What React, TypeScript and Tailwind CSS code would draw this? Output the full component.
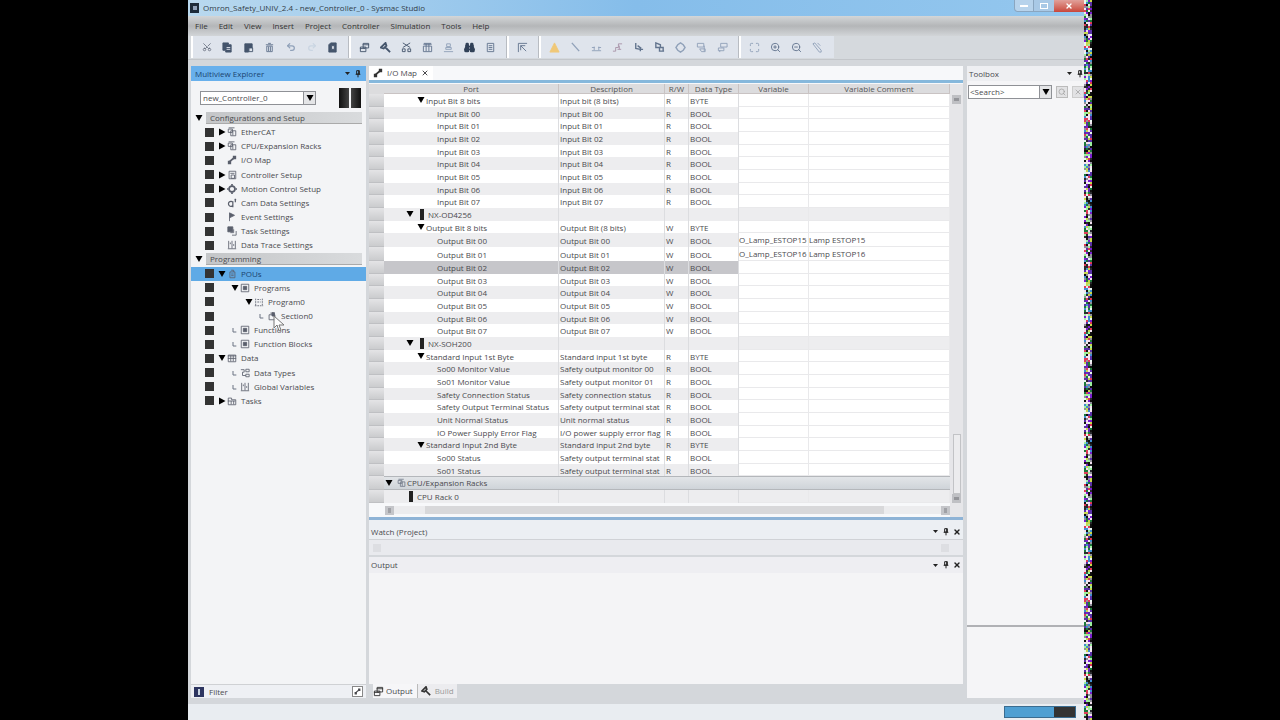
import React from 'react'
import {
  Scissors,
  Undo2,
  Redo2,
  Binoculars,
  ZoomIn,
  ZoomOut,
  Maximize,
  Search,
  X,
} from 'lucide-react'

type IconName =
  | 'copy' | 'paste' | 'trash' | 'book' | 'windows' | 'hammer' | 'cutBox' | 'grid' | 'stamp'
  | 'list' | 'corner' | 'warning' | 'slash' | 'wave' | 'graph' | 'plug' | 'plugs' | 'ring'
  | 'stack' | 'stackUp' | 'pencil' | 'rack' | 'map' | 'sheet' | 'gear' | 'cam' | 'flag'
  | 'task' | 'trace' | 'pou' | 'program' | 'dots' | 'section' | 'data' | 'types' | 'folder'
  | 'pin' | 'branch'

const shapes: Record<IconName, React.ReactNode> = {
  copy: <><path d="M1 1h6v2h3v8H4V9H1z" fill="currentColor" /><path d="M5 6h4M5 8h4" stroke="#dfe4ec" /></>,
  paste: <><path d="M2 2h8v5H6v4H2z" fill="currentColor" /><path d="M6.5 6.5h4v4h-4zM4 4h4" fill="#dfe4ec" stroke="currentColor" /></>,
  trash: <><path d="M2 3h8M4.500 1.500h3M3 4.500h6v6H3zM5 5v5M7 5v5" /></>,
  book: <><path d="M2 3l2-2h6v10H2z" fill="currentColor" /><path d="M5 4h3v4H5z" fill="#dfe4ec" /></>,
  windows: <path d="M4.500 1.500h6v5h-6zM1.500 5.500h6v5h-6zM4 3h7M1 7h6" />,
  hammer: <path d="M1 6l5-5 1 3-3 3zM6 6l5 5" strokeWidth="2" />,
  cutBox: <path d="M2 1l8 5M10 1L2 6M1.500 7.500h3v3h-3zM7.500 7.500h3v3h-3z" />,
  grid: <path d="M1.500 2.500h9M1.500 4.500h9v6h-9zM4.500 2v8M7.500 2v8M2 1.500h8" />,
  stamp: <path d="M4 2h4v3H4zM3 6h6v2H3zM1 10.500h10" />,
  list: <path d="M2.500 1.500h7v9h-7zM4 4h4M4 6h4M4 8h4" />,
  corner: <path d="M1.500 11V1.500H11M4 4l6 6M4 4h5M4 4v5" />,
  warning: <path d="M6 1l5 10H1z" fill="currentColor" />,
  slash: <path d="M2 1l8 9" strokeWidth="1.500" />,
  wave: <path d="M1 9.500h10M3.500 9V5M8.500 9V5M1 6h3M8 6h3" />,
  graph: <path d="M1 10h3V6h3V2h4M6 8h4M8 4v4" />,
  plug: <path d="M3 1v6l5 1M5 4l4 3M8 6v4M6 8h5" strokeWidth="1.500" />,
  plugs: <path d="M2 1v5h5V3zM6 6h4v4H6zM8 10h3" strokeWidth="1.500" />,
  ring: <path d="M6 1l3 2 2 3-2 3-3 2-3-2-2-3 2-3z" strokeWidth="1.500" />,
  stack: <path d="M1.500 1.500h7v4h-7zM4 7.500h6v3H6zM9 4v6" />,
  stackUp: <path d="M4 1.500h7v4H4zM1.500 6.500h6v3h-6zM3 9v2" />,
  pencil: <path d="M1 2l2-1 7 8v2H8zM6 1l3 3" />,
  rack: <path d="M1.500 2.500h5v4h-5zM4.500 4.500h6v6h-6zM7 5v5M2 1h7" />,
  map: <><path d="M1 7h4v4H1zM7 1h4v4H7z" fill="currentColor" stroke="none" /><path d="M3 8l6-5" strokeWidth="2" /></>,
  sheet: <path d="M2.500 1.500h8v9h-8zM4 4h5M5 6h4v4H5z" />,
  gear: <><circle cx="6" cy="6" r="3.500" strokeWidth="2" /><path d="M6 0v2M6 10v2M0 6h2M10 6h2" strokeWidth="2" /></>,
  cam: <><path d="M7 5a3 3 0 1 0 0 4M7 4v7M9 2h2M10 1v4" strokeWidth="1.500" /></>,
  flag: <path d="M3 11V1l6 3-6 3" fill="currentColor" />,
  task: <><path d="M1 1h6v6H1z" fill="currentColor" /><path d="M8 4v4H4M11 6v5H6" /></>,
  trace: <path d="M2 1v9M6 1v9M10 1v9M1 10.500h10M4 3v2M8 5v2" />,
  pou: <path d="M3.500 3.500h6v7h-6zM5 1.500h3v2M5 6h3M5 8h3" />,
  program: <><path d="M1.500 1.500h9v9h-9z" /><path d="M4 4h4v4H4z" fill="currentColor" /></>,
  dots: <path d="M2 2v8M1 10.500h10M10 2v8M4 3h4M4 6h4" strokeDasharray="2 1" />,
  section: <><path d="M2.500 4.500h7v6h-7zM4 2.500h4" /><path d="M6 2h3v4H6z" fill="currentColor" /></>,
  data: <path d="M1.500 2.500h9v8h-9zM1 3.500h10M1 6.500h10M4.500 3v7M7.500 3v7" />,
  types: <path d="M1 2h4v3H3v4h4M7 1.500h4v3H7zM7 7.500h4v3H7z" />,
  folder: <path d="M1.500 2.500h4v2h5v6h-9zM5 6v4M8 6v4M1 6h9" />,
  pin: <path d="M4 1h4v5H4zM2.500 6.500h7M6 7v4M7 1v5" strokeWidth="1.500" />,
  branch: <path d="M3 3v6h5" strokeWidth="1.500" />,
}

function Icon({ name, className = '' }: { name: IconName; className?: string }) {
  return (
    <svg viewBox="0 0 12 12" fill="none" stroke="currentColor" className={`shrink-0 ${className}`} aria-hidden="true">
      {shapes[name]}
    </svg>
  )
}

function Triangle({ open }: { open: boolean }) {
  return (
    <svg viewBox="0 0 8 8" className="h-2 w-2 shrink-0 fill-black" aria-hidden="true">
      <path d={open ? 'M0.500 1h7L4 7z' : 'M1 0.500v7L7.500 4z'} />
    </svg>
  )
}

interface Tool {
  label: string
  icon: React.ReactNode
}

const tool = (label: string, name: IconName, color = 'text-slate-500'): Tool => ({
  label,
  icon: <Icon name={name} className={`h-[11px] w-[11px] ${color}`} />,
})

const toolGroups: Tool[][] = [
  [
    { label: 'Cut', icon: <Scissors className="h-[10px] w-[10px] -rotate-90 text-gray-500" /> },
    tool('Copy', 'copy', 'text-slate-600'),
    tool('Paste', 'paste', 'text-slate-600'),
    tool('Delete', 'trash', 'text-slate-500'),
    { label: 'Undo', icon: <Undo2 className="h-[10px] w-[10px] text-slate-400" strokeWidth={3} /> },
    { label: 'Redo', icon: <Redo2 className="h-[10px] w-[10px] text-slate-300" strokeWidth={3} /> },
    tool('Library', 'book', 'text-slate-600'),
  ],
  [
    tool('Windows', 'windows', 'text-slate-600'),
    tool('Build', 'hammer', 'text-slate-600'),
    tool('Check', 'cutBox', 'text-slate-600'),
    tool('Variables', 'grid'),
    tool('Stamp', 'stamp', 'text-slate-400'),
    { label: 'Find', icon: <Binoculars className="h-[11px] w-[11px] fill-slate-700 text-slate-700" strokeWidth={3} /> },
    tool('List', 'list'),
  ],
  [tool('Select', 'corner')],
  [
    tool('Warning', 'warning', 'text-[#f0c878]'),
    tool('Offline', 'slash', 'text-slate-400'),
    tool('Transfer', 'wave', 'text-slate-400'),
    tool('Monitor', 'graph', 'text-[#a893a8]'),
    tool('Connect', 'plug'),
    tool('Disconnect', 'plugs'),
    tool('Run', 'ring', 'text-slate-400'),
    tool('Download', 'stack', 'text-slate-400'),
    tool('Upload', 'stackUp', 'text-slate-400'),
  ],
  [
    { label: 'Fit', icon: <Maximize className="h-[11px] w-[11px] text-slate-400" /> },
    { label: 'Zoom in', icon: <ZoomIn className="h-[11px] w-[11px] text-slate-500" /> },
    { label: 'Zoom out', icon: <ZoomOut className="h-[11px] w-[11px] text-slate-500" /> },
    tool('Edit', 'pencil', 'text-slate-400'),
  ],
]

const menus = ['File', 'Edit', 'View', 'Insert', 'Project', 'Controller', 'Simulation', 'Tools', 'Help']

interface TreeNode {
  label: string
  icon?: IconName
  depth: number
  open?: boolean
  branch?: boolean
  selected?: boolean
}

const tree: TreeNode[] = [
  { label: 'Configurations and Setup', depth: 0, open: true },
  { label: 'EtherCAT', icon: 'rack', depth: 1, open: false },
  { label: 'CPU/Expansion Racks', icon: 'rack', depth: 1, open: false },
  { label: 'I/O Map', icon: 'map', depth: 1 },
  { label: 'Controller Setup', icon: 'sheet', depth: 1, open: false },
  { label: 'Motion Control Setup', icon: 'gear', depth: 1, open: false },
  { label: 'Cam Data Settings', icon: 'cam', depth: 1 },
  { label: 'Event Settings', icon: 'flag', depth: 1 },
  { label: 'Task Settings', icon: 'task', depth: 1 },
  { label: 'Data Trace Settings', icon: 'trace', depth: 1 },
  { label: 'Programming', depth: 0, open: true },
  { label: 'POUs', icon: 'pou', depth: 1, open: true, selected: true },
  { label: 'Programs', icon: 'program', depth: 2, open: true },
  { label: 'Program0', icon: 'dots', depth: 3, open: true },
  { label: 'Section0', icon: 'section', depth: 4, branch: true },
  { label: 'Functions', icon: 'program', depth: 2, branch: true },
  { label: 'Function Blocks', icon: 'program', depth: 2, branch: true },
  { label: 'Data', icon: 'data', depth: 1, open: true },
  { label: 'Data Types', icon: 'types', depth: 2, branch: true },
  { label: 'Global Variables', icon: 'trace', depth: 2, branch: true },
  { label: 'Tasks', icon: 'folder', depth: 1, open: false },
]

const treeIndent = ['', 'pl-[3px]', 'pl-[16px]', 'pl-[30px]', 'pl-[43px]']

interface Row {
  port: string
  level: 'rack' | 'unit' | 'cpu' | 'group' | 'leaf'
  desc?: string
  rw?: string
  type?: string
  variable?: string
  comment?: string
}

const group = (port: string, desc: string, rw: string): Row => ({ port, level: 'group', desc, rw, type: 'BYTE' })
const leaf = (port: string, desc: string, rw: string, variable?: string, comment?: string): Row => ({
  port, level: 'leaf', desc, rw, type: 'BOOL', variable, comment,
})
const bits = [0, 1, 2, 3, 4, 5, 6, 7]

const rows: Row[] = [
  group('Input Bit 8 bits', 'Input bit (8 bits)', 'R'),
  ...bits.map((n) => leaf(`Input Bit 0${n}`, `Input Bit 0${n}`, 'R')),
  { port: 'NX-OD4256', level: 'unit' },
  group('Output Bit 8 bits', 'Output Bit (8 bits)', 'W'),
  ...bits.map((n) =>
    n < 2
      ? leaf(`Output Bit 0${n}`, `Output Bit 0${n}`, 'W', `O_Lamp_ESTOP1${5 + n}`, `Lamp ESTOP1${5 + n}`)
      : leaf(`Output Bit 0${n}`, `Output Bit 0${n}`, 'W')
  ),
  { port: 'NX-SOH200', level: 'unit' },
  group('Standard Input 1st Byte', 'Standard input 1st byte', 'R'),
  leaf('So00 Monitor Value', 'Safety output monitor 00', 'R'),
  leaf('So01 Monitor Value', 'Safety output monitor 01', 'R'),
  leaf('Safety Connection Status', 'Safety connection status', 'R'),
  leaf('Safety Output Terminal Status', 'Safety output terminal stat', 'R'),
  leaf('Unit Normal Status', 'Unit normal status', 'R'),
  leaf('IO Power Supply Error Flag', 'I/O power supply error flag', 'R'),
  group('Standard Input 2nd Byte', 'Standard input 2nd byte', 'R'),
  leaf('So00 Status', 'Safety output terminal stat', 'R'),
  leaf('So01 Status', 'Safety output terminal stat', 'R'),
  { port: 'CPU/Expansion Racks', level: 'rack' },
  { port: 'CPU Rack 0', level: 'cpu' },
]
const selectedRow = 13

const portIndent = {
  rack: 'pl-[1px]',
  unit: 'pl-[21px]',
  cpu: 'pl-[24px]',
  group: 'pl-[32px]',
  leaf: 'pl-[52px]',
}

function TitleBar() {
  return (
    <header className="flex h-4 items-center bg-linear-to-r from-[#b9d9ef] via-[#85bdea] to-[#94c7ee] pl-[2px] text-[#333d48]">
      <span className="mr-1 flex h-[10px] w-[9px] items-center justify-center bg-[#1d2b3a]">
        <span className="h-1 w-1 bg-slate-400" />
      </span>
      <h1 className="flex-1">Omron_Safety_UNIV_2.4 - new_Controller_0 - Sysmac Studio</h1>
      <div className="flex h-3 self-start text-[#52687e]">
        <button aria-label="Minimize" className="flex w-5 items-center justify-center rounded-bl border border-t-0 border-[#8aa6c0] bg-[#b7d3ec]">
          <span className="h-[2px] w-2 bg-white" />
        </button>
        <button aria-label="Restore" className="flex w-5 items-center justify-center border-b border-[#8aa6c0] bg-[#a9c9e6]">
          <span className="h-[6px] w-2 border border-white" />
        </button>
        <button aria-label="Close" className="flex w-[30px] items-center justify-center bg-linear-to-b from-[#e0a09a] to-[#c8453b] text-white">
          <X className="h-2 w-2" strokeWidth={4} />
        </button>
      </div>
    </header>
  )
}

function MenuBar() {
  return (
    <nav className="flex h-5 items-center gap-[11px] bg-linear-to-b from-[#d3d6d8] via-[#b4b6b8] to-[#d2d5d8] pl-[7px] text-[#333]">
      {menus.map((m) => (
        <button key={m}>{m}</button>
      ))}
    </nav>
  )
}

function Toolbar() {
  return (
    <div className="flex h-6 border-b border-[#c3c6ca] bg-[#d5d9dd] pb-[1px] pl-[3px]">
      {toolGroups.map((tools, i) => (
        <div key={i} className="flex border-l-2 border-white bg-[#dfe4ec] pr-[6px] pl-[3px] shadow-[inset_-1px_0_0_#b8bcc2] last:shadow-none">
          {tools.map((t) => (
            <button key={t.label} aria-label={t.label} className="flex w-[21px] items-center justify-center">
              {t.icon}
            </button>
          ))}
        </div>
      ))}
    </div>
  )
}

function PanelButtons({ close }: { close?: boolean }) {
  return (
    <div className="flex items-center gap-[3px] text-[#222]">
      <button aria-label="Panel menu" className="flex w-2 justify-center">
        <svg viewBox="0 0 5 3" className="h-[3px] w-[5px] fill-current"><path d="M0 0h5L2.500 3z" /></svg>
      </button>
      <button aria-label="Auto hide"><Icon name="pin" className="h-2 w-2" /></button>
      {close && <button aria-label="Close"><X className="h-2 w-2" strokeWidth={4} /></button>}
    </div>
  )
}

function TreeItem({ node }: { node: TreeNode }) {
  if (node.depth === 0) {
    return (
      <li className="flex items-center pl-1">
        <Triangle open />
        <span className="mr-1 ml-[3px] h-3 flex-1 border-b border-[#aaa] bg-linear-to-r from-[#c4c6c8] to-[#d9dbdd] pl-1 leading-[12px]">
          {node.label}
        </span>
      </li>
    )
  }
  return (
    <li className={node.selected ? 'relative flex items-center bg-[#5faae6] pl-[14px] text-[#1b4470]' : 'relative flex items-center pl-[14px]'}>
      <span className="h-[9px] w-[9px] shrink-0 bg-[#333]" />
      <div className={`flex items-center ${treeIndent[node.depth]}`}>
        <span className="flex w-[9px] justify-center">
          {node.open !== undefined && <Triangle open={node.open} />}
          {node.branch && <Icon name="branch" className="h-2 w-2 text-gray-500" />}
        </span>
        <Icon name={node.icon!} className="mr-1 ml-[1px] h-[10px] w-[10px] text-[#5a5f6c]" />
        <span>{node.label}</span>
      </div>
      {node.label === 'Section0' && (
        <svg viewBox="0 0 12 18" className="absolute top-[6px] left-[82px] z-10 h-[18px] w-3" aria-hidden="true">
          <path d="M1 1v12l3-3 2 6 2-1-2-5h5z" fill="#fff" fillOpacity="0.8" stroke="#777" />
        </svg>
      )}
    </li>
  )
}

function Explorer() {
  return (
    <aside className="flex w-[175px] shrink-0 flex-col bg-[#f3f4f6]">
      <div className="flex h-[15px] items-center justify-between bg-[#68b0ec] pr-1 pl-1 text-[#1b4470]">
        <h2>Multiview Explorer</h2>
        <PanelButtons />
      </div>
      <div className="flex h-[30px] items-center justify-between pt-1 pr-[5px] pl-[9px]">
        <div className="relative w-[116px]">
          <select aria-label="Controller" className="block h-[14px] w-full appearance-none border border-[#8f9196] bg-white pl-[2px] leading-[12px]">
            <option>new_Controller_0</option>
          </select>
          <span className="pointer-events-none absolute top-0 right-0 flex h-[14px] w-[13px] items-center justify-center border border-[#8f9196] bg-[#e4e5e7]">
            <Triangle open />
          </span>
        </div>
        <div className="flex gap-[2px]">
          <span className="h-5 w-[10px] bg-linear-to-r from-[#111] to-[#444]" />
          <span className="h-5 w-[10px] bg-linear-to-r from-[#444] to-[#111]" />
        </div>
      </div>
      <ul className="grid h-[297px] auto-rows-fr">
        {tree.map((node) => (
          <TreeItem key={node.label} node={node} />
        ))}
      </ul>
      <div className="flex-1" />
      <div className="flex h-[14px] items-center border-t border-[#cfd1d4] bg-[#eef0f4] px-[3px]">
        <span className="mr-[5px] flex h-[10px] w-[10px] items-center justify-center bg-[#2d3560]">
          <span className="h-[6px] w-[2px] bg-slate-300" />
        </span>
        <span className="flex-1">Filter</span>
        <button aria-label="Edit filter" className="flex h-[11px] w-[11px] items-center justify-center border border-[#888] bg-white">
          <Icon name="map" className="h-[7px] w-[7px]" />
        </button>
      </div>
    </aside>
  )
}

function IoTable() {
  return (
    <table className="h-[419px] w-full table-fixed border-separate border-spacing-0">
      <colgroup>
        <col className="w-[15px]" />
        <col className="w-[175px]" />
        <col className="w-[106px]" />
        <col className="w-6" />
        <col className="w-[50px]" />
        <col className="w-[70px]" />
        <col />
      </colgroup>
      <thead>
        <tr className="h-[10px] bg-[#dcdcde] text-[#555]">
          <th aria-label="Row" className="p-0" />
          {['Port', 'Description', 'R/W', 'Data Type', 'Variable', 'Variable Comment'].map((h) => (
            <th key={h} className="h-[10px] border-r border-b border-[#c9c3c3] p-0 leading-[9px] font-normal whitespace-nowrap">
              {h}
            </th>
          ))}
        </tr>
      </thead>
      <tbody>
        {rows.map((row, i) => {
          const full = row.level === 'unit' || row.level === 'cpu'
          const shade = i === selectedRow ? 'bg-[#c6c6ca]' : i % 2 ? 'bg-[#ededef]' : 'bg-white'
          const cell = `border-r border-[#dcdde0] overflow-hidden whitespace-nowrap p-0 pl-[1px] leading-[11px] ${shade}`
          const editable = `border-r border-b border-[#e9e9eb] overflow-hidden whitespace-nowrap p-0 leading-[11px] ${full ? shade : 'bg-white'}`
          return (
            <tr key={i}>
              <td className="border-b border-[#bfc0c3] bg-linear-to-b from-[#e4e4e6] to-[#cbccce] p-0" />
              {row.level === 'rack' ? (
                <td colSpan={6} className="border-y border-[#b4b7bb] bg-linear-to-b from-[#e2e5e8] to-[#cfd4d9] p-0 leading-[10px]">
                  <div className="flex items-center pl-[1px]">
                    <Triangle open />
                    <Icon name="rack" className="mr-[1px] ml-1 h-[10px] w-[9px] text-gray-500" />
                    {row.port}
                  </div>
                </td>
              ) : (
                <>
                  <td className={cell}>
                    <div className={`flex items-center ${portIndent[row.level]}`}>
                      {(row.level === 'group' || row.level === 'unit') && <Triangle open />}
                      {row.level === 'group' && <span className="w-[1px]" />}
                      {row.level === 'unit' && <span className="mr-1 ml-[6px] h-[11px] w-1 bg-[#222]" />}
                      {row.level === 'cpu' && <span className="mr-1 h-[11px] w-1 bg-[#222]" />}
                      {row.port}
                    </div>
                  </td>
                  <td className={cell}>{row.desc}</td>
                  <td className={cell}>{row.rw}</td>
                  <td className={cell}>{row.type}</td>
                  <td className={editable}>{row.variable}</td>
                  <td className={editable}>{row.comment}</td>
                </>
              )}
            </tr>
          )
        })}
      </tbody>
    </table>
  )
}

function Editor() {
  return (
    <section className="flex flex-col border-b-[3px] border-[#8eb3d6] bg-[#f7f8fa]">
      <div className="flex h-[14px] items-end">
        <div className="flex h-[14px] items-center gap-1 bg-white px-1">
          <Icon name="map" className="h-[10px] w-[10px] text-[#333]" />
          <span>I/O Map</span>
          <button aria-label="Close I/O Map"><X className="h-2 w-2" strokeWidth={3} /></button>
        </div>
      </div>
      <div className="h-[3px] bg-[#86b8dc]" />
      <div className="flex pt-[1px]">
        <div className="min-w-0 flex-1">
          <IoTable />
          <div className="flex h-[14px] items-center justify-between pl-4">
            <button aria-label="Scroll left" className="flex h-[9px] w-[9px] items-center justify-center bg-[#c4c5c9]">
              <span className="h-[5px] w-[3px] bg-[#a0a1a6]" />
            </button>
            <div className="flex h-2 flex-1 bg-[#ececee] pl-[31px]">
              <div className="h-full w-[89%] bg-[#d8d8da]" />
            </div>
            <button aria-label="Scroll right" className="flex h-[9px] w-[9px] items-center justify-center bg-[#c4c5c9]">
              <span className="h-[5px] w-[3px] bg-[#a0a1a6]" />
            </button>
          </div>
        </div>
        <div className="flex w-[13px] flex-col items-center bg-[#e6e6e9] pt-[11px] pb-[14px]">
          <button aria-label="Scroll up" className="flex h-[9px] w-[9px] items-center justify-center bg-[#bfc0c4]">
            <span className="h-[3px] w-[5px] bg-[#94959a]" />
          </button>
          <div className="flex-1" />
          <div className="h-[60px] w-2 border border-[#c2c3c6] bg-[#ececee]" />
          <button aria-label="Scroll down" className="flex h-[9px] w-[9px] items-center justify-center bg-[#bfc0c4]">
            <span className="h-[3px] w-[5px] bg-[#94959a]" />
          </button>
        </div>
      </div>
    </section>
  )
}

function Center() {
  return (
    <main className="flex min-w-0 flex-1 flex-col">
      <Editor />
      <section className="bg-[#e9eaee]">
        <div className="flex h-[20px] items-center justify-between border-b border-[#d0d2d6] bg-[#eceff3] pt-1 pr-[2px] pl-[2px]">
          <h2>Watch (Project)</h2>
          <PanelButtons close />
        </div>
        <div className="flex h-[15px] items-center justify-between pr-[14px] pl-1">
          <span className="h-2 w-2 bg-[#dddee2]" />
          <span className="h-2 w-2 bg-[#dddee2]" />
        </div>
      </section>
      <section className="mt-[2px] flex flex-1 flex-col bg-[#f4f4f6]">
        <div className="flex h-4 items-center justify-between bg-[#eeeef2] pr-[2px] pl-[2px]">
          <h2>Output</h2>
          <PanelButtons close />
        </div>
      </section>
      <div className="flex h-[14px] pl-1">
        <button className="flex items-center gap-[2px] border-r border-[#bbb] bg-[#f6f6f8] pr-1">
          <Icon name="windows" className="h-[11px] w-[11px] text-[#333]" />
          Output
        </button>
        <button className="flex items-center gap-1 bg-[#ececef] px-[3px] text-[#999]">
          <Icon name="hammer" className="h-[10px] w-[10px] text-[#333]" />
          Build
        </button>
      </div>
    </main>
  )
}

function Toolbox() {
  return (
    <aside className="flex w-[117px] shrink-0 flex-col bg-[#f5f5f7]">
      <div className="flex h-[15px] items-center justify-between overflow-hidden bg-[#eeeff2] pl-[2px]">
        <h2>Toolbox</h2>
        <PanelButtons />
      </div>
      <div className="flex h-[22px] items-center gap-1 pl-[1px]">
        <div className="flex h-[14px] flex-1 border border-[#8f9196] bg-white">
          <input aria-label="Search toolbox" defaultValue="<Search>" className="w-full min-w-0 flex-1 pl-[1px] outline-none" />
          <button aria-label="Search history" className="flex w-3 items-center justify-center border-l border-[#8f9196] bg-[#e4e5e7]">
            <Triangle open />
          </button>
        </div>
        <button aria-label="Search" className="flex h-3 w-3 items-center justify-center border border-[#bbb] bg-[#e2e2e4] text-[#999]">
          <Search className="h-2 w-2" />
        </button>
        <button aria-label="Clear" className="flex h-3 w-3 items-center justify-center border border-[#ccc] bg-[#e2e2e4] text-[#999]">
          <X className="h-2 w-2" />
        </button>
      </div>
      <div className="flex-1" />
      <div className="h-[73px] border-t-2 border-[#b0b1b5]" />
    </aside>
  )
}

const palette = ['#1c7a3a', '#7a1ed0', '#e03a58', '#9df0a0', '#2a2a2e', '#5a30a8', '#f4e0f0', '#3f8fd0', '#111', '#c8d84a', '#8f8f9a', '#e8f4f0']

// Video static along the right edge of the captured desktop
function Static() {
  let seed = 17
  const cells = Array.from({ length: 4 * 120 }, () => {
    seed = (seed * 16807) % 2147483647
    return palette[seed % palette.length]
  })
  return (
    <svg className="h-auto min-h-screen w-2 shrink-0" shapeRendering="crispEdges" aria-hidden="true">
      <defs>
        <pattern id="static" width="8" height="240" patternUnits="userSpaceOnUse">
          {cells.map((fill, i) => (
            <rect key={i} x={(i % 4) * 2} y={Math.floor(i / 4) * 2} width="2" height="2" fill={fill} />
          ))}
        </pattern>
      </defs>
      <rect width="100%" height="100%" fill="url(#static)" />
    </svg>
  )
}

export default function App() {
  return (
    <div className="flex min-h-screen bg-black px-[188px] font-['Open_Sans','Noto_Sans',sans-serif] text-[8px] leading-[12px] text-[#4a4a4e]">
      <div className="flex min-w-0 flex-1 flex-col bg-[#d4d7db]">
        <TitleBar />
        <MenuBar />
        <Toolbar />
        <div className="flex flex-1 pt-[6px] pb-[6px] pl-[3px]">
          <Explorer />
          <div className="w-[3px] shrink-0" />
          <Center />
          <div className="w-1 shrink-0" />
          <Toolbox />
        </div>
        <footer className="flex h-4 items-center justify-end bg-[#e9edf1] pr-2">
          <div className="flex h-3 w-[72px] border border-[#3a6c90] bg-[#333]">
            <div className="w-[49px] bg-[#4f9fd2]" />
          </div>
        </footer>
      </div>
      <Static />
    </div>
  )
}
